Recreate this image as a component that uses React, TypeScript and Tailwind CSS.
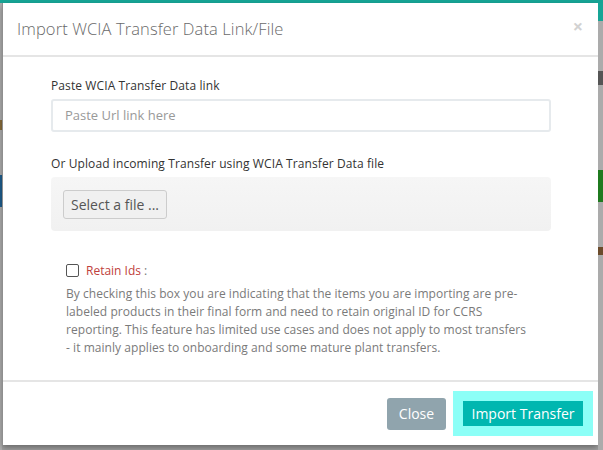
import React from "react";

export default function App() {
  return (
    <div className="w-[603px] h-[450px] overflow-hidden bg-[#a3a3a3] flex flex-col font-['Open_Sans',sans-serif]">
      <div className="h-[3px] bg-[#17a596] shrink-0" />
      <div className="flex flex-row flex-1">
        {/* left backdrop strip */}
        <div className="w-[2px] flex flex-col bg-[#b0b0b0]">
          <div className="h-[117px]" />
          <div className="h-[10px] bg-[#8a6d3b]" />
          <div className="h-[45px]" />
          <div className="h-[32px] bg-[#1f5f8f]" />
        </div>
        {/* modal */}
        <div className="w-[596px] h-[442px] bg-white border-l border-[#8f8f8f] shadow-[0_3px_6px_rgba(0,0,0,0.35)] flex flex-col">
          <div className="h-[54px] flex items-center justify-between pl-[14px] pr-[15px] border-b-2 border-[#e5e5e5]">
            <div className="text-[16.5px] font-light text-[#6a6a6a] tracking-[0.1px]">Import WCIA Transfer Data Link/File</div>
            <div className="text-[18px] leading-none font-bold text-[#d2d2d2] -mt-[6px]">×</div>
          </div>
          <div className="flex-1 flex flex-col pl-[48px] pr-[47px] pt-[20px]">
            <div className="text-[12px] leading-[17px] text-[#333] tracking-[0.1px]">Paste WCIA Transfer Data link</div>
            <div className="mt-[5px] h-[33px] rounded-[3px] border-2 border-[#e6eaed] flex items-center pl-[12px] text-[13px] text-[#999]">
              Paste Url link here
            </div>
            <div className="mt-[23px] text-[12px] leading-[17px] text-[#333] tracking-[0.1px]">Or Upload incoming Transfer using WCIA Transfer Data file</div>
            <div className="mt-[5px] h-[54px] rounded-[4px] bg-gradient-to-b from-[#f6f6f6] to-[#f1f1f1] flex items-center pl-[12px]">
              <div className="h-[29px] w-[104px] rounded-[3px] border border-[#cccccc] bg-[#f0f0f0] flex items-center justify-center text-[14px] text-[#555]">
                Select a file ...
              </div>
            </div>
            <div className="px-[15px]">
              <div className="mt-[31px] flex items-center h-[17px]">
                <div className="w-[13px] h-[13px] rounded-[2px] border border-[#555] bg-white" />
                <span className="ml-[7px] text-[12px] text-[#c0403c]">Retain Ids</span>
                <span className="ml-[3px] text-[12px] text-[#777]">:</span>
              </div>
              <p className="mt-[6px] whitespace-nowrap text-[12px] leading-[18px] text-[#7a7a7a] tracking-[0.05px]">
                By checking this box you are indicating that the items you are importing are pre-
                <br />
                labeled products in their final form and need to retain original ID for CCRS
                <br />
                reporting. This feature has limited use cases and does not apply to most transfers
                <br />
                - it mainly applies to onboarding and some mature plant transfers.
              </p>
            </div>
          </div>
          <div className="h-[65px] border-t-2 border-[#e5e5e5] flex items-center justify-end pr-[5px] gap-[7px]">
            <div className="h-[32px] w-[59px] rounded-[3px] bg-[#90a4ad] text-white text-[14px] flex items-center justify-center">Close</div>
            <div className="h-[45px] w-[140px] bg-[#8cfff7] flex items-center justify-center">
              <div className="h-[25px] w-[120px] bg-[#00b7b0] text-white text-[14px] flex items-center justify-center">Import Transfer</div>
            </div>
          </div>
        </div>
        {/* right backdrop strip */}
        <div className="w-[5px] flex flex-col bg-[#ababab]">
          <div className="h-[18px] bg-[#17a596]" />
          <div className="h-[50px]" />
          <div className="h-[14px] bg-[#555]" />
          <div className="h-[85px]" />
          <div className="h-[32px] bg-[#1f7a1f]" />
          <div className="h-[45px]" />
          <div className="h-[8px] bg-[#6b4b2b]" />
        </div>
      </div>
    </div>
  );
}
